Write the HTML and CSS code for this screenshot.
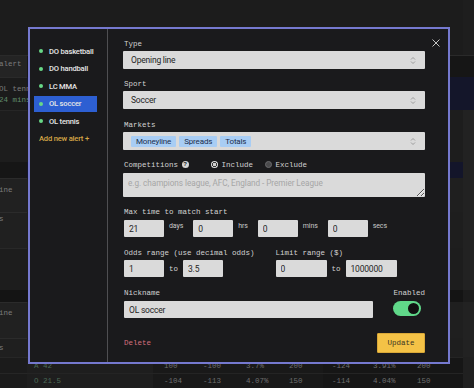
FILE: index.html
```html
<!DOCTYPE html>
<html>
<head>
<meta charset="utf-8">
<link rel="stylesheet" href="styles.css">
</head>
<body>
<div class="page">
  <div class="row r1"><div class="lc"></div><div class="mc"></div><div class="rc"></div></div>
  <div class="row r2"><div class="lc"><span class="t">alert</span></div><div class="mc"></div><div class="rc"></div></div>
  <div class="row r3"><div class="lc"><div class="t">OL tennis</div><div class="t green">24 mins</div></div><div class="mc"></div><div class="rc"></div></div>
  <div class="row r4"><div class="lc"></div><div class="mc"></div><div class="rc"></div></div>
  <div class="row r5"><div class="lc"></div><div class="mc"></div><div class="rc"></div></div>
  <div class="row r6"><div class="lc"><span class="t">ine</span></div><div class="mc"></div><div class="rc"></div></div>
  <div class="row r7"><div class="lc"><span class="t">s</span></div><div class="mc"></div><div class="rc"></div></div>
  <div class="row r8"><div class="lc"></div><div class="mc"></div><div class="rc"></div></div>
  <div class="row r9"><div class="lc"></div><div class="mc"></div><div class="rc"></div></div>
  <div class="row r10"><div class="lc"><span class="t">ine</span></div><div class="mc"></div><div class="rc"></div></div>
  <div class="row r11"><div class="lc"><span class="t">s</span></div><div class="mc"></div><div class="rc"></div></div>
  <div class="row r12 odds-row">
    <div class="lc"></div>
    <div class="mc cells">
      <div class="c1">A 42</div>
      <div class="c2"><span>100</span><span>-100</span><span>3.7%</span><span>200</span></div>
      <div class="c3"><span>-124</span><span>3.91%</span><span>200</span></div>
    </div>
    <div class="rc"></div>
  </div>
  <div class="row r13 odds-row">
    <div class="lc"></div>
    <div class="mc cells">
      <div class="c1">O 21.5</div>
      <div class="c2"><span>-104</span><span>-113</span><span>4.07%</span><span>150</span></div>
      <div class="c3"><span>-114</span><span>4.04%</span><span>150</span></div>
    </div>
    <div class="rc"></div>
  </div>
</div>

<div class="modal">
  <aside class="side">
    <ul class="alerts">
      <li class="alert"><span class="dot"></span>DO basketball</li>
      <li class="alert"><span class="dot"></span>DO handball</li>
      <li class="alert"><span class="dot"></span>LC MMA</li>
      <li class="alert active"><span class="dot"></span>OL soccer</li>
      <li class="alert"><span class="dot"></span>OL tennis</li>
    </ul>
    <div class="add">Add new alert +</div>
  </aside>

  <div class="form">
    <div class="field f-type">
      <div class="label">Type</div>
      <div class="select"><span class="val">Opening line</span>
        <svg class="chev" width="6" height="9" viewBox="0 0 6 9"><path d="M1 3.5 L3 1.5 L5 3.5 M1 5.5 L3 7.5 L5 5.5" fill="none" stroke="#8c8c8c" stroke-width="0.8"/></svg>
      </div>
    </div>
    <div class="field f-sport">
      <div class="label">Sport</div>
      <div class="select"><span class="val">Soccer</span>
        <svg class="chev" width="6" height="9" viewBox="0 0 6 9"><path d="M1 3.5 L3 1.5 L5 3.5 M1 5.5 L3 7.5 L5 5.5" fill="none" stroke="#8c8c8c" stroke-width="0.8"/></svg>
      </div>
    </div>
    <div class="field f-markets">
      <div class="label">Markets</div>
      <div class="select multi">
        <div class="tags"><span class="tag">Moneyline</span><span class="tag">Spreads</span><span class="tag">Totals</span></div>
        <svg class="chev" width="6" height="9" viewBox="0 0 6 9"><path d="M1 3.5 L3 1.5 L5 3.5 M1 5.5 L3 7.5 L5 5.5" fill="none" stroke="#8c8c8c" stroke-width="0.8"/></svg>
      </div>
    </div>
    <div class="field f-comp">
      <div class="comp-row">
        <span class="mono">Competitions</span>
        <span class="help">?</span>
        <span class="radio inc"><span class="rb on"></span>Include</span>
        <span class="radio exc"><span class="rb"></span>Exclude</span>
      </div>
      <textarea class="area" placeholder="e.g. champions league, AFC, England - Premier League"></textarea>
    </div>
    <div class="field f-time">
      <div class="label">Max time to match start</div>
      <div class="time-row">
        <input class="inp w40" value="21"><span class="unit">days</span>
        <input class="inp w40" value="0"><span class="unit">hrs</span>
        <input class="inp w40" value="0"><span class="unit">mins</span>
        <input class="inp w40" value="0"><span class="unit">secs</span>
      </div>
    </div>
    <div class="field f-range">
      <div class="range-row">
        <div class="group">
          <div class="label">Odds range (use decimal odds)</div>
          <div class="pair"><input class="inp w40" value="1"><span class="to">to</span><input class="inp w40" value="3.5"></div>
        </div>
        <div class="group">
          <div class="label">Limit range ($)</div>
          <div class="pair"><input class="inp w51" value="0"><span class="to">to</span><input class="inp w51" value="1000000"></div>
        </div>
      </div>
    </div>
    <div class="field f-nick">
      <div class="nick-row">
        <div class="group grow">
          <div class="label">Nickname</div>
          <input class="inp full" value="OL soccer">
        </div>
        <div class="group">
          <div class="label en">Enabled</div>
          <span class="toggle"><span class="knob"></span></span>
        </div>
      </div>
    </div>
    <div class="footer">
      <span class="delete">Delete</span>
      <button class="update">Update</button>
    </div>
  </div>

  <span class="close">
    <svg width="8" height="8" viewBox="0 0 8 8"><path d="M0.5 0.5 L7.5 7.5 M7.5 0.5 L0.5 7.5" stroke="#c4c4c4" stroke-width="1"/></svg>
  </span>
</div>
</body>
</html>
```

FILE: styles.css
```css
* { box-sizing: border-box; }
html, body { margin: 0; padding: 0; }
body {
  width: 474px;
  height: 388px;
  overflow: hidden;
  background: #1c1c1c;
  font-family: Roboto, "Liberation Sans", sans-serif;
  position: relative;
}

/* background page */
.page { display: flex; flex-direction: column; height: 388px; }
.row { display: flex; flex: none; }
.lc {
  width: 27px; flex: none; white-space: nowrap;
  font: 7.5px/10px "Liberation Mono", monospace; color: #7c7c7c;
}
.lc .t { display: block; margin-left: -1px; }
.lc .green { color: #5f8a6a; }
.mc { flex: 1; }
.rc { width: 11px; flex: none; background: #202020; }

.r1 { height: 55px; background: #1c1c1c; }
.r1 .rc { background: #1e1e1e; }
.r2 { height: 22px; background: #161616; border-top: 1px solid #2a2a2a; }
.r2 .lc { background: #242424; padding-top: 3px; }
.r2 .rc { background: #161616; }
.r3 { height: 33px; background: #14162a; }
.r3 .lc { background: #1b1b1b; padding-top: 6px; line-height: 11px; border-top: 1px solid #2a2a2a; }
.r3 .rc { background: #14162a; }
.r4 { height: 52px; background: #1d1d1d; }
.r4 .lc { border-top: 1px solid #262626; }
.r4 .rc { background: #222; }
.r5 { height: 16px; background: #13152a; }
.r5 .lc { background: #161616; }
.r5 .rc { background: #222; }
.r6 { height: 34px; background: #1f1f1f; }
.r6 .lc { background: #212121; padding-top: 6px; border-top: 1px solid #2b2b2b; }
.r6 .rc { background: #222; }
.r7 { height: 36px; background: #1e1e1e; }
.r7 .lc { background: #202020; padding-top: 1px; border-top: 1px solid #2b2b2b; }
.r7 .rc { background: #222; }
.r8 { height: 42px; background: #1d1d1d; }
.r8 .lc { border-top: 1px solid #282828; }
.r8 .rc { background: #222; }
.r9 { height: 12px; background: #141414; }
.r9 .rc { background: #1c1c1c; }
.r10 { height: 36px; background: #1f1f1f; }
.r10 .lc { background: #212121; padding-top: 5px; border-top: 1px solid #2b2b2b; }
.r10 .rc { background: #222; }
.r11 { height: 19px; background: #1e1e1e; }
.r11 .lc { background: #1f1f1f; padding-top: 4px; border-top: 1px solid #2b2b2b; }
.r11 .rc { background: #222; }
.r12 { height: 16px; }
.r13 { height: 15px; }
.odds-row .lc { background: #1b1b1b; border-top: 1px solid #262626; }
.odds-row .rc { background: #202020; }

.cells { display: flex; font: 7.5px "Liberation Mono", monospace; color: #6e6e6e; }
.cells > div { display: flex; align-items: center; border-top: 1px solid #242424; }
.c1 { width: 126px; background: #1e1e1e; padding-left: 7px; color: #4d6a57; }
.c2 { width: 170px; background: #191919; padding-left: 11px; }
.c3 { width: 140px; background: #161616; padding-left: 9px; }
.c2 span:nth-child(1) { width: 39px; }
.c2 span:nth-child(2) { width: 43px; }
.c2 span:nth-child(3) { width: 43px; }
.c3 span:nth-child(1) { width: 41px; }
.c3 span:nth-child(2) { width: 44px; }

/* modal */
.modal {
  position: absolute;
  left: 28px; top: 27px;
  width: 422px; height: 337px;
  border: 2px solid #7579cf;
  background: #1a1a1c;
  display: flex;
}
.side {
  width: 78px; flex: none;
  border-right: 1px solid #4f4f52;
  padding: 14px 10px 0 4px;
}
.alerts { list-style: none; margin: 0; padding: 0; }
.alert {
  height: 16px; margin-bottom: 1.6px;
  display: flex; align-items: center;
  padding-left: 5px;
  color: #e6e6e6;
  font-size: 7.6px; font-weight: 500; letter-spacing: -0.2px;
  white-space: nowrap;
}
.alert.active { background: #2d5fd2; }
.dot { width: 4px; height: 4px; border-radius: 50%; background: #68d887; margin-right: 6px; flex: none; }
.add {
  height: 16px; display: flex; align-items: center;
  padding-left: 5px;
  color: #d6a747; font-size: 7.6px; font-weight: 500; letter-spacing: -0.2px; white-space: nowrap;
}

.form { flex: 1; padding: 10px 23px 0 15px; display: flex; flex-direction: column; }
.label, .mono {
  font: 7.5px/10px "Liberation Mono", monospace;
  color: #d2d2d2;
  white-space: nowrap;
}
.label { height: 10px; margin: 0 0 2px 1px; }

.select {
  height: 18px;
  background: #dadada;
  border-radius: 1px;
  display: flex; align-items: center; justify-content: space-between;
  padding: 0 9px 0 8px;
}
.val { font-size: 8.5px; letter-spacing: -0.2px; color: #252525; }
.chev { flex: none; }
.tags { display: flex; gap: 3px; }
.tag {
  height: 11px; padding: 0 5px;
  display: flex; align-items: center;
  background: #a8cdf4; color: #1b2d4c;
  font-size: 8px; letter-spacing: -0.15px;
  border-radius: 1px;
}

.f-type { margin-bottom: 10px; }
.f-sport { margin-bottom: 11px; }
.f-markets { margin-bottom: 8.5px; }
.f-comp { margin-bottom: 10px; }
.f-time { margin-bottom: 11px; }
.f-time .label { margin-bottom: 3px; }
.f-range { margin-bottom: 11px; }
.f-nick .label { margin-bottom: 3px; }

.comp-row { height: 12px; display: flex; align-items: center; margin: 0 0 2.5px 1px; }
.help {
  width: 7px; height: 7px; border-radius: 50%;
  background: #d6d6d6; color: #1a1a1c;
  font: bold 6px/7px "Liberation Sans", sans-serif; text-align: center;
  margin-left: 3.5px;
}
.radio {
  display: flex; align-items: center;
  font: 7.5px/10px "Liberation Mono", monospace; color: #d2d2d2;
}
.radio.inc { margin-left: 22px; }
.radio.exc { margin-left: 11.5px; }
.rb {
  width: 7.5px; height: 7.5px; border-radius: 50%;
  background: #4a4a4c; border: 1px solid #6a6a6c;
  margin-right: 3.5px;
}
.rb.on { background: radial-gradient(circle, #cfcfcf 0 1.6px, #3b3b3b 1.6px 2.5px, #dcdcdc 2.5px); border: none; }

.area {
  display: block;
  width: 100%; height: 24px;
  background: #dadada; border: none; border-radius: 1px;
  padding: 5px 5px;
  font: 8.2px/10px Roboto, sans-serif; letter-spacing: -0.05px;
  color: #252525;
  resize: vertical;
  outline: none;
  margin: 0;
}
.area::placeholder { color: #a6a6a6; }

.inp {
  height: 17px;
  background: #dadada; border: none; border-radius: 1px;
  padding: 0 5px;
  font: 8.5px Roboto, sans-serif; letter-spacing: -0.2px;
  color: #252525; outline: none;
  margin: 0;
}
.w40 { width: 40px; }
.w51 { width: 51px; }
.full { width: 100%; height: 17px; }

.time-row { display: flex; align-items: flex-start; margin-left: 1px; }
.unit {
  font-size: 7px; color: #c8c8c8; line-height: 8px;
  margin: 2px 10px 0 5px; letter-spacing: -0.1px;
}
.range-row { display: flex; gap: 20px; }
.group { display: flex; flex-direction: column; }
.pair { display: flex; align-items: center; margin-left: 1px; }
.to { font: 7.5px "Liberation Mono", monospace; color: #d2d2d2; margin: 0 5px; }

.nick-row { display: flex; gap: 20px; }
.grow { flex: 1; }
.grow .inp { margin-left: 1px; }
.en { margin-bottom: 2px; }
.toggle {
  width: 28px; height: 15px; border-radius: 8px;
  background: #60d889;
  display: flex; align-items: center; justify-content: flex-end;
  padding: 0 2px;
  margin-left: 1px;
}
.knob { width: 11px; height: 11px; border-radius: 50%; background: #111; }

.footer {
  margin-top: 15px;
  display: flex; justify-content: space-between; align-items: center;
  padding-left: 1px;
}
.delete { font: 7.5px "Liberation Mono", monospace; color: #d26f7c; }
.update {
  width: 48px; height: 20px;
  background: #f4c246; border: 1px solid #d9a838; border-radius: 1px;
  font: 7.5px "Liberation Mono", monospace; color: #3a3424;
  padding: 0;
}

.close {
  position: absolute;
  right: 8px; top: 9.5px;
  width: 8px; height: 8px;
  display: block;
}
.close svg { display: block; }
```
